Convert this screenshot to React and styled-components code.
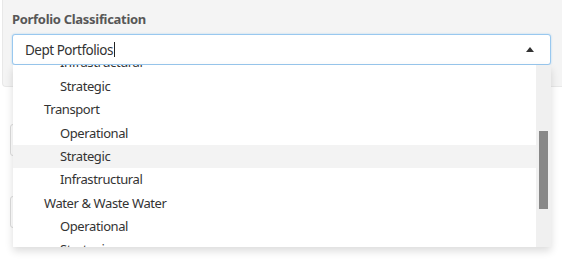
import React, {useLayoutEffect, useRef} from 'react'
import styled, {createGlobalStyle} from 'styled-components'

const groups = [
  {name: 'Health', items: ['Operational', 'Strategic', 'Infrastructural']},
  {name: 'Housing', items: ['Operational', 'Infrastructural', 'Strategic']},
  {name: 'Transport', items: ['Operational', 'Strategic', 'Infrastructural']},
  {name: 'Water & Waste Water', items: ['Operational', 'Strategic', 'Infrastructural']},
]

const App = () => {
  const listRef = useRef(null)

  useLayoutEffect(() => {
    if (listRef.current) listRef.current.scrollTop = 154
  }, [])

  return (
    <>
      <GlobalStyle />
      <Page>
        <Panel>
          <Label>Porfolio Classification</Label>
          <SelectWrap>
            <SelectBox>
              <Value>
                Dept Portfolios
                <TextCaret />
              </Value>
              <Arrow />
            </SelectBox>
            <Dropdown>
              <List ref={listRef}>
                {groups.map(group => (
                  <React.Fragment key={group.name}>
                    <Option>{group.name}</Option>
                    {group.items.map(item => (
                      <Option
                        key={item}
                        $child
                        $active={group.name === 'Transport' && item === 'Strategic'}
                      >
                        {item}
                      </Option>
                    ))}
                  </React.Fragment>
                ))}
              </List>
              <ScrollTrack>
                <ScrollThumb />
              </ScrollTrack>
            </Dropdown>
          </SelectWrap>
        </Panel>
        <Fields>
          <FieldInput />
          <FieldInput />
        </Fields>
      </Page>
    </>
  )
}
export default App

const GlobalStyle = createGlobalStyle`
  body {
    margin: 0;
    background: #ffffff;
    font-family: 'Noto Sans', 'Open Sans', sans-serif;
  }
`
const Page = styled.div`
  width: 562px;
  height: 263px;
  overflow: hidden;
`
const Panel = styled.div`
  margin-left: 2px;
  height: 87px;
  box-sizing: border-box;
  padding: 10px 0 0 9px;
  background: #f4f4f4;
  border-left: 1px solid #e8e8e8;
  border-bottom: 1px solid #e8e8e8;
  border-bottom-left-radius: 4px;
`
const Label = styled.div`
  font-size: 13px;
  font-weight: 700;
  letter-spacing: -0.3px;
  line-height: 18px;
  color: #575757;
  margin-bottom: 6px;
`
const SelectWrap = styled.div`
  position: relative;
  width: 539px;
`
const SelectBox = styled.div`
  display: flex;
  align-items: center;
  justify-content: space-between;
  height: 31px;
  box-sizing: border-box;
  padding: 0 16px 0 12px;
  background: #ffffff;
  border: 1px solid #99c8ef;
  border-radius: 3px;
  box-shadow: 0 0 2px rgba(82, 168, 236, 0.45);
`
const Value = styled.span`
  display: flex;
  align-items: center;
  font-size: 13.5px;
  letter-spacing: -0.5px;
  color: #333333;
`
const TextCaret = styled.span`
  width: 1px;
  height: 15px;
  margin-left: 1px;
  background: #222222;
`
const Arrow = styled.span`
  width: 0;
  height: 0;
  border-left: 4px solid transparent;
  border-right: 4px solid transparent;
  border-bottom: 5px solid #333333;
`
const Dropdown = styled.div`
  position: absolute;
  top: 100%;
  left: 1px;
  right: 0;
  height: 182px;
  display: flex;
  background: #ffffff;
  box-shadow: 0 4px 8px rgba(0, 0, 0, 0.14);
  z-index: 2;
`
const List = styled.div`
  flex: 1;
  overflow: hidden;
`
const ScrollTrack = styled.div`
  width: 15px;
  box-sizing: border-box;
  padding: 66px 3px 0;
  background: #f0f0f0;
`
const ScrollThumb = styled.div`
  height: 78px;
  background: #888888;
`
const Option = styled.div`
  height: 23.4px;
  line-height: 23.4px;
  font-size: 13px;
  letter-spacing: -0.4px;
  color: #333333;
  padding-left: ${props => (props.$child ? '47px' : '31px')};
  background: ${props => (props.$active ? '#f3f3f3' : 'transparent')};
  white-space: nowrap;
`
const Fields = styled.div`
  display: flex;
  flex-direction: column;
  gap: 40px;
  padding: 37px 0 0 10px;
`
const FieldInput = styled.div`
  width: 530px;
  height: 30px;
  border: 1px solid #dddddd;
  border-radius: 3px;
`
